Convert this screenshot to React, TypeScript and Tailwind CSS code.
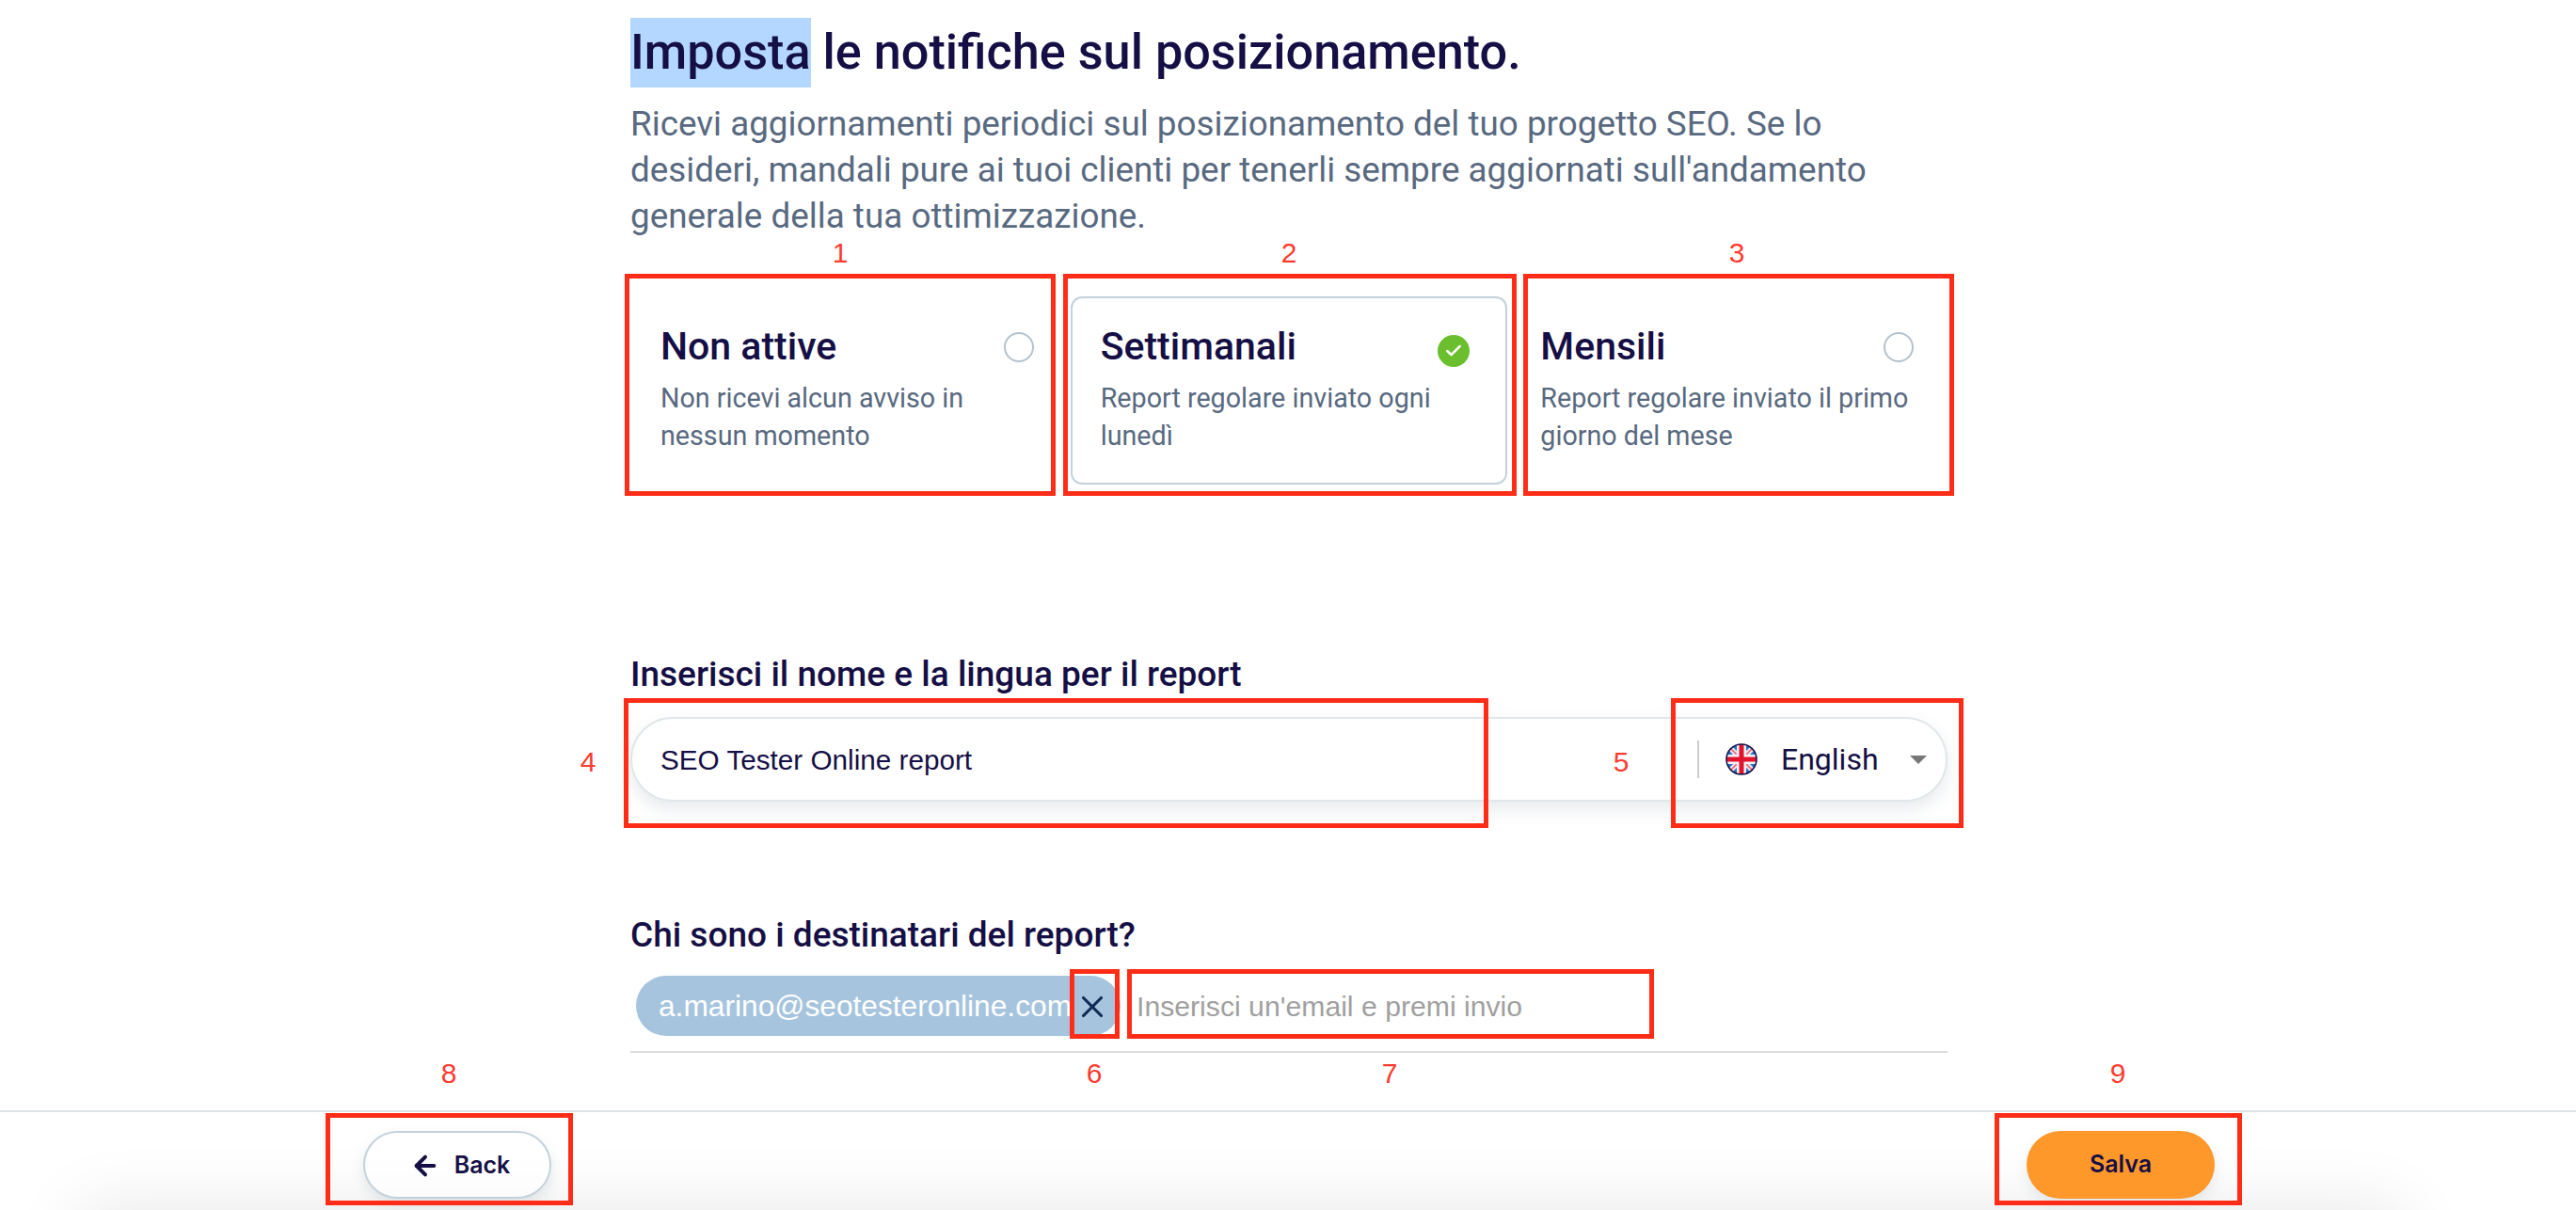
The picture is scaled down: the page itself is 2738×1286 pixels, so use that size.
import { ArrowLeft, Check, X } from "lucide-react"

const plans = [
  { title: "Non attive", text: ["Non ricevi alcun avviso in", "nessun momento"], active: false },
  { title: "Settimanali", text: ["Report regolare inviato ogni", "lunedì"], active: true },
  { title: "Mensili", text: ["Report regolare inviato il primo", "giorno del mese"], active: false },
]

// red review marks drawn over the screenshot
const marks = [
  { n: "1", box: "left-[664px] top-[291px] w-[458px] h-[236px]", label: "left-[873px] top-[248px]" },
  { n: "2", box: "left-[1130px] top-[291px] w-[482px] h-[236px]", label: "left-[1350px] top-[248px]" },
  { n: "3", box: "left-[1619px] top-[291px] w-[458px] h-[236px]", label: "left-[1826px] top-[248px]" },
  { n: "4", box: "left-[663px] top-[742px] w-[919px] h-[138px]", label: "left-[605px] top-[789px]" },
  { n: "5", box: "left-[1776px] top-[742px] w-[311px] h-[138px]", label: "left-[1703px] top-[789px]" },
  { n: "6", box: "left-[1137px] top-[1030px] w-[53px] h-[74px]", label: "left-[1143px] top-[1120px]" },
  { n: "7", box: "left-[1198px] top-[1030px] w-[560px] h-[74px]", label: "left-[1457px] top-[1120px]" },
  { n: "8", box: "left-[346px] top-[1183px] w-[263px] h-[98px]", label: "left-[457px] top-[1120px]" },
  { n: "9", box: "left-[2120px] top-[1183px] w-[263px] h-[98px]", label: "left-[2231px] top-[1120px]" },
]

function Flag() {
  return (
    <svg viewBox="0 0 34 34" className="w-[34px] h-[34px] shrink-0">
      <defs>
        <clipPath id="flag-clip">
          <circle cx="17" cy="17" r="16" />
        </clipPath>
      </defs>
      <g clipPath="url(#flag-clip)">
        <rect width="34" height="34" fill="#2a6fc4" />
        <path d="M0 0 34 34M34 0 0 34" stroke="#f0e6ea" strokeWidth="5.5" />
        <path d="M2 2 32 32M32 2 2 32" stroke="#ea5d72" strokeWidth="1.6" />
        <rect x="12" width="10" height="34" fill="#f4f4f6" />
        <rect y="12" width="34" height="10" fill="#f4f4f6" />
        <rect x="14.5" width="5" height="34" fill="#e3132d" />
        <rect y="14.5" width="34" height="5" fill="#e3132d" />
      </g>
      <circle cx="17" cy="17" r="16" fill="none" stroke="#15124a" strokeWidth="1.6" />
    </svg>
  )
}

export default function App() {
  return (
    <div className="relative h-[1286px] overflow-hidden bg-white flex flex-col font-['Roboto',sans-serif] text-[#150f45]">
      <main className="flex-1 w-[1400px] ml-[670px] pt-[19px]">
        <h1 className="text-[52.2px] leading-[74px] font-medium">
          <span className="inline-block bg-[#b3d7ff]">Imposta</span> le notifiche sul posizionamento.
        </h1>
        <p className="mt-[14px] text-[36.85px] leading-[49px] text-[#586980]">
          Ricevi aggiornamenti periodici sul posizionamento del tuo progetto SEO. Se lo
          <br />
          desideri, mandali pure ai tuoi clienti per tenerli sempre aggiornati sull'andamento
          <br />
          generale della tua ottimizzazione.
        </p>

        {/* Plans */}
        <div className="mt-[61px] grid grid-cols-3 gap-[3px]">
          {plans.map((plan) => (
            <div
              key={plan.title}
              className={`h-[200px] rounded-[12px] px-[30px] pt-[28px] border-2 ${plan.active ? "border-[#c3d2dc]" : "border-transparent"}`}
            >
              <div className="flex items-center justify-between h-[46px]">
                <span className="text-[41px] leading-[46px] font-medium">{plan.title}</span>
                {plan.active ? (
                  <span className="w-[34px] h-[34px] mr-[8px] mt-[9px] rounded-full bg-[#6bbf2f] flex items-center justify-center">
                    <Check className="w-5 h-5 text-white" strokeWidth={3} />
                  </span>
                ) : (
                  <span className="w-[32px] h-[32px] mr-[4px] mt-[2px] rounded-full border-2 border-[#b3c2cc]" />
                )}
              </div>
              <p className="mt-[12px] text-[28.7px] leading-[40px] text-[#586980]">
                {plan.text[0]}
                <br />
                {plan.text[1]}
              </p>
            </div>
          ))}
        </div>

        {/* Report name and language */}
        <h2 className="mt-[182px] text-[37px] leading-[40px] font-medium">Inserisci il nome e la lingua per il report</h2>
        <div className="mt-[25px] h-[90px] rounded-full border-2 border-[#e0e7ea] bg-white shadow-[0_8px_18px_rgba(60,80,100,0.12)] flex items-center pl-[30px] pr-[20px]">
          <span className="flex-1 pt-[3px] font-['Liberation_Sans',sans-serif] text-[29.7px]">SEO Tester Online report</span>
          <span className="w-[2px] h-[40px] bg-[#cccccc]" />
          <span className="ml-[28px]">
            <Flag />
          </span>
          <span className="ml-[25px] w-[137px] text-[32px]">English</span>
          <span className="w-0 h-0 border-x-[9px] border-x-transparent border-t-[9px] border-t-[#777777]" />
        </div>

        {/* Recipients */}
        <h2 className="mt-[122px] text-[37px] leading-[40px] font-medium">Chi sono i destinatari del report?</h2>
        <div className="mt-[23px] h-[82px] border-b-2 border-[#dddddd] flex items-start pl-[6px] font-['Liberation_Sans',sans-serif]">
          <div className="h-[64px] w-[515px] rounded-full bg-[#a6c4dd] flex items-center pl-[24px]">
            <span className="pt-[2px] text-[31.7px] text-white">a.marino@seotesteronline.com</span>
            <X className="ml-[3px] mt-[2px] w-[38px] h-[38px] text-[#0f2a55]" strokeWidth={2} />
          </div>
          <span className="ml-[17px] h-[64px] pt-[2px] flex items-center text-[30.2px] text-[#a0a0a0]">Inserisci un'email e premi invio</span>
        </div>
      </main>

      {/* Footer */}
      <footer className="relative h-[106px] border-t-2 border-[#dfe6e8] bg-white">
        {/* soft glow rising from below the fold */}
        <div className="absolute top-[104px] left-[86px] right-[186px] h-[100px] shadow-[0_0_76px_rgba(0,0,0,0.1)]" />
        <div className="relative w-[1968px] ml-[386px] pt-[20px] flex justify-between">
          <button className="w-[200px] h-[72px] pl-[6px] pt-[1px] rounded-full border-2 border-[#c3d2dc] bg-white/60 shadow-[0_6px_14px_rgba(60,80,100,0.12)] flex items-center justify-center gap-[15px] font-['Inter',sans-serif] font-semibold text-[25px]">
            <ArrowLeft className="w-[32px] h-[32px]" strokeWidth={3} />
            Back
          </button>
          <button className="w-[200px] h-[72px] rounded-full bg-[#ff982a] shadow-[0_6px_14px_rgba(60,80,100,0.1)] font-['Inter',sans-serif] font-semibold text-[25px]">
            Salva
          </button>
        </div>
      </footer>

      {marks.map((m) => (
        <div key={m.n}>
          <div className={`absolute border-[5px] border-[#ff2d17] ${m.box}`} />
          <span className={`absolute w-[40px] text-center font-['Liberation_Sans',sans-serif] text-[30px] leading-[42px] text-[#ff3b30] ${m.label}`}>
            {m.n}
          </span>
        </div>
      ))}
    </div>
  )
}
